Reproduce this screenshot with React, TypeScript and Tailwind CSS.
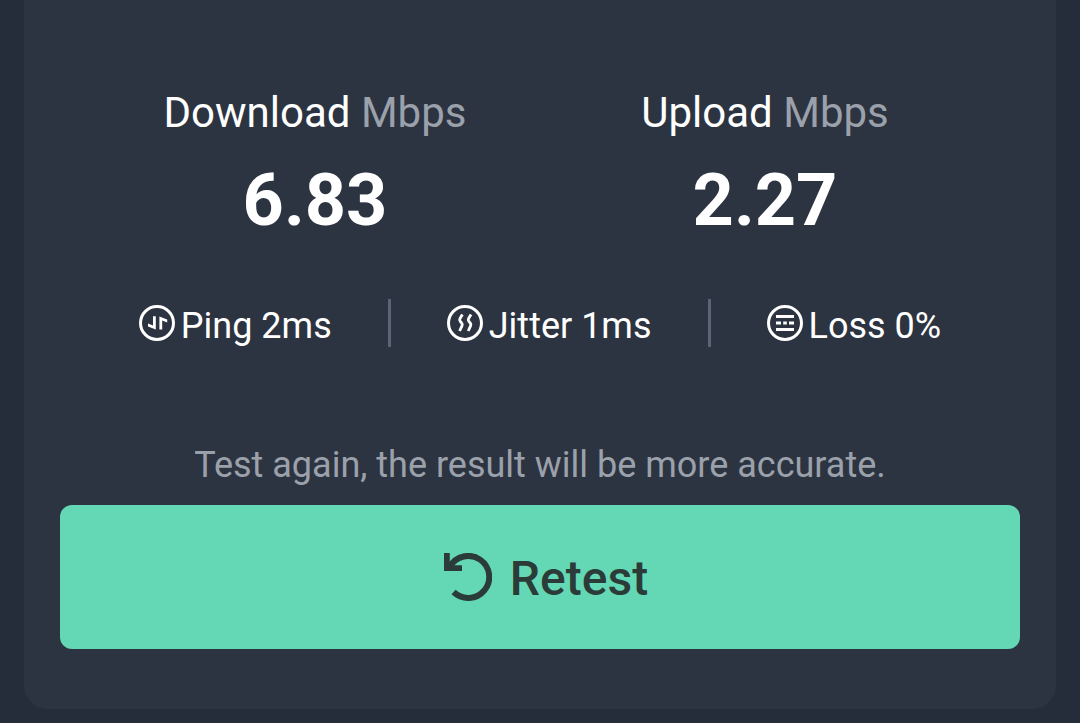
import React from 'react';

const results = [
  { label: 'Download', unit: 'Mbps', value: '6.83' },
  { label: 'Upload', unit: 'Mbps', value: '2.27' },
];

function PingIcon() {
  return (
    <svg viewBox="0 0 36 36" className="size-9 shrink-0" fill="none" aria-hidden="true">
      <circle cx="18" cy="18" r="16.5" stroke="currentColor" strokeWidth="3" />
      <path d="M14 11.3h2.8v13.2L9 21.6v-3l5 1.9zM20.4 24.6V11.4l7.8 3.1v3l-5-1.9v9z" fill="currentColor" />
    </svg>
  );
}

function JitterIcon() {
  return (
    <svg viewBox="0 0 36 36" className="size-9 shrink-0" fill="none" stroke="currentColor" strokeWidth="2.8" aria-hidden="true">
      <circle cx="18" cy="18" r="16.5" strokeWidth="3" />
      <path d="M15.4 9.5l-2.4 4c-.7 1.2-.6 2 .3 3l1.2 1.3c.9 1 1 1.9.5 3L12.6 26M24 9.5l-2.4 4c-.7 1.2-.6 2 .3 3l1.2 1.3c.9 1 1 1.9.5 3L21.2 26" />
    </svg>
  );
}

function LossIcon() {
  return (
    <svg viewBox="0 0 36 36" className="size-9 shrink-0" fill="none" stroke="currentColor" strokeWidth="3" aria-hidden="true">
      <circle cx="18" cy="18" r="16.5" />
      <path d="M9 11.5h18M9 18h5M16.2 18h3.6M22 18h5M9 24.5h18" />
    </svg>
  );
}

function RetestIcon() {
  return (
    <svg viewBox="0 0 48 48" className="size-12 shrink-0" fill="none" aria-hidden="true">
      <path d="M9.6 39A21 21 0 1 0 6 13.5" stroke="currentColor" strokeWidth="6" />
      <path d="M0 0h5.8v9.5L9 12.2h9V18H0z" fill="currentColor" />
    </svg>
  );
}

const stats = [
  { text: 'Ping 2ms', icon: <PingIcon /> },
  { text: 'Jitter 1ms', icon: <JitterIcon /> },
  { text: 'Loss 0%', icon: <LossIcon /> },
];

export default function App() {
  return (
    <div className="min-h-screen bg-[#262d3a] px-6 pb-3.5 font-[Roboto,sans-serif] text-white">
      <main className="rounded-b-3xl bg-[#2d3441] px-9 pt-[89px] pb-15">
        {/* Speeds */}
        <div className="grid grid-cols-2 px-[30px] text-center">
          {results.map((result) => (
            <section key={result.label}>
              <h2 className="text-[42px] leading-12">
                {result.label} <span className="text-[#9ba1ab]">{result.unit}</span>
              </h2>
              <p className="mt-6 text-7xl leading-20 font-bold">{result.value}</p>
            </section>
          ))}
        </div>

        {/* Connection quality */}
        <ul className="mt-[58px] flex justify-center gap-14">
          {stats.map((stat, i) => (
            <React.Fragment key={stat.text}>
              {i > 0 && <li className="h-12 w-[3px] bg-[#5a6377]" aria-hidden="true" />}
              <li className="flex h-12 items-center gap-1.5">
                {stat.icon}
                <span className="pt-1.5 text-4xl leading-12 whitespace-nowrap">{stat.text}</span>
              </li>
            </React.Fragment>
          ))}
        </ul>

        {/* Retest */}
        <p className="mt-24 text-center text-4xl leading-11 text-[#9ba1ab]">
          Test again, the result will be more accurate.
        </p>
        <button
          type="button"
          className="mt-[18px] flex h-36 w-full items-center justify-center gap-[18px] rounded-xl bg-[#64d8b5] pl-3 text-5xl font-medium text-[#2b3b38]"
        >
          <RetestIcon />
          <span className="pt-1">Retest</span>
        </button>
      </main>
    </div>
  );
}
